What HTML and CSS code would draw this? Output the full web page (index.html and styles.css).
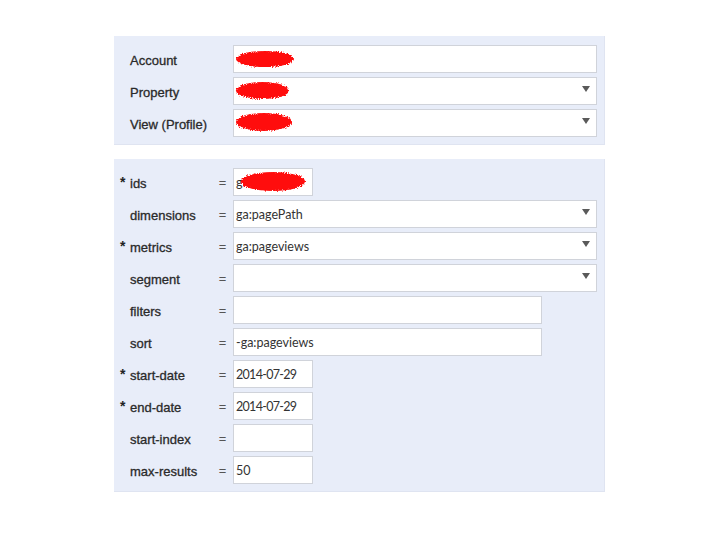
FILE: index.html
```html
<!DOCTYPE html>
<html>
<head>
<meta charset="utf-8">
<link rel="stylesheet" href="styles.css">
</head>
<body>
<svg class="defs" width="0" height="0" aria-hidden="true">
  <defs>
    <filter id="rough" x="-20%" y="-40%" width="140%" height="180%">
      <feTurbulence type="fractalNoise" baseFrequency="0.9" numOctaves="2" seed="3" result="n"/>
      <feDisplacementMap in="SourceGraphic" in2="n" scale="4" xChannelSelector="R" yChannelSelector="G"/>
    </filter>
  </defs>
</svg>
<div class="page">
  <div class="panel panel-top">
    <div class="row">
      <span class="star"></span><span class="label">Account</span><span class="eq"></span>
      <div class="field full"><span class="scribble s-account"></span></div>
    </div>
    <div class="row">
      <span class="star"></span><span class="label">Property</span><span class="eq"></span>
      <div class="field full select"><span class="scribble s-property"></span><span class="arrow"></span></div>
    </div>
    <div class="row">
      <span class="star"></span><span class="label">View (Profile)</span><span class="eq"></span>
      <div class="field full select"><span class="scribble s-view"></span><span class="arrow"></span></div>
    </div>
  </div>

  <div class="panel panel-query">
    <div class="row">
      <span class="star">*</span><span class="label">ids</span><span class="eq">=</span>
      <div class="field short"><span class="val">g</span><span class="scribble s-ids"></span></div>
    </div>
    <div class="row">
      <span class="star"></span><span class="label">dimensions</span><span class="eq">=</span>
      <div class="field full select"><span class="val">ga:pagePath</span><span class="arrow"></span></div>
    </div>
    <div class="row">
      <span class="star">*</span><span class="label">metrics</span><span class="eq">=</span>
      <div class="field full select"><span class="val">ga:pageviews</span><span class="arrow"></span></div>
    </div>
    <div class="row">
      <span class="star"></span><span class="label">segment</span><span class="eq">=</span>
      <div class="field full select"><span class="val"></span><span class="arrow"></span></div>
    </div>
    <div class="row">
      <span class="star"></span><span class="label">filters</span><span class="eq">=</span>
      <div class="field medium"><span class="val"></span></div>
    </div>
    <div class="row">
      <span class="star"></span><span class="label">sort</span><span class="eq">=</span>
      <div class="field medium"><span class="val">-ga:pageviews</span></div>
    </div>
    <div class="row">
      <span class="star">*</span><span class="label">start-date</span><span class="eq">=</span>
      <div class="field short"><span class="val date">2014-07-29</span></div>
    </div>
    <div class="row">
      <span class="star">*</span><span class="label">end-date</span><span class="eq">=</span>
      <div class="field short"><span class="val date">2014-07-29</span></div>
    </div>
    <div class="row">
      <span class="star"></span><span class="label">start-index</span><span class="eq">=</span>
      <div class="field short"><span class="val"></span></div>
    </div>
    <div class="row">
      <span class="star"></span><span class="label">max-results</span><span class="eq">=</span>
      <div class="field short"><span class="val">50</span></div>
    </div>
  </div>
</div>
</body>
</html>
```
FILE: styles.css
```css
html, body {
  margin: 0;
  padding: 0;
  background: #ffffff;
}
body {
  width: 720px;
  height: 540px;
  font-family: "Liberation Sans", Arial, sans-serif;
}
.defs {
  position: absolute;
  width: 0;
  height: 0;
}
.page {
  padding: 36px 0 0 114px;
  display: flex;
  flex-direction: column;
  gap: 14px;
}
.panel {
  width: 491px;
  box-sizing: border-box;
  background: #e8edf9;
  border-right: 1px solid #dfe4f1;
  border-bottom: 1px solid #dfe4f1;
  padding: 9px 7px 7px 0;
  display: flex;
  flex-direction: column;
  gap: 4px;
}
.row {
  display: grid;
  grid-template-columns: 16px 86px 17px 1fr;
  align-items: center;
  height: 28px;
}
.star {
  font-size: 14px;
  color: #222;
  padding-left: 6px;
  align-self: start;
  line-height: 1;
  padding-top: 7px;
  font-weight: bold;
}
.label {
  font-size: 13px;
  color: #2a2a2a;
  -webkit-text-stroke: 0.3px #2a2a2a;
  white-space: nowrap;
  padding-top: 2px;
}
.eq {
  font-size: 12px;
  color: #555;
  padding-left: 3px;
  padding-top: 2px;
  -webkit-text-stroke: 0.3px #555;
}
.field {
  height: 28px;
  box-sizing: border-box;
  background: #ffffff;
  border: 1px solid #d0d3da;
  display: flex;
  align-items: center;
  padding-left: 2px;
  position: relative;
  font-family: Lato, "Open Sans", sans-serif;
  font-size: 12.5px;
  color: #333;
}
.date {
  letter-spacing: -0.7px;
}
.full { width: 364px; }
.medium { width: 309px; }
.short { width: 80px; }
.arrow {
  position: absolute;
  right: 6px;
  top: 8px;
  width: 0;
  height: 0;
  border-left: 4.5px solid transparent;
  border-right: 4.5px solid transparent;
  border-top: 6px solid #5a5a5a;
}
.scribble {
  display: inline-block;
  background: #ff0808;
  border-radius: 50%;
  filter: url(#rough);
}
.s-account { width: 58px; height: 16px; margin-top: -1px; }
.s-property { width: 53px; height: 17px; margin-top: -2px; }
.s-view { width: 56px; height: 18px; margin-top: -2px; }
.s-ids { width: 64px; height: 19px; margin-left: -2px; margin-top: -2px; }
```
